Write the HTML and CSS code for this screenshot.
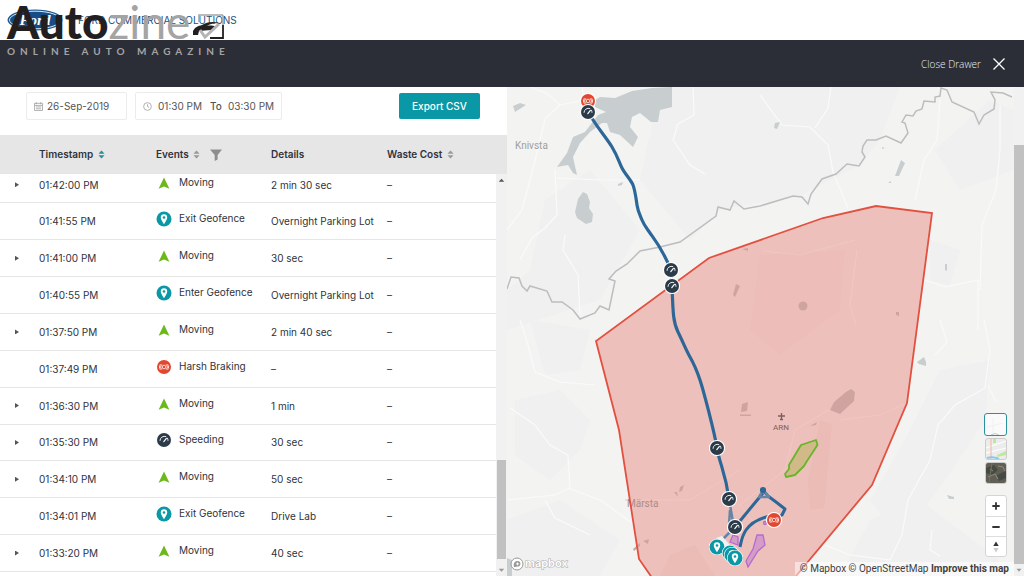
FILE: index.html
```html
<!DOCTYPE html>
<html lang="en">
<head>
<meta charset="utf-8">
<title>Ford Commercial Solutions</title>
<link rel="stylesheet" href="styles.css">
</head>
<body>
<svg class="sprite" aria-hidden="true">
  <symbol id="moving" viewBox="0 0 16 16"><path d="M8 2.6 13.4 13.8 8 11.6 2.6 13.8Z" fill="#6cb91a"/></symbol>
  <symbol id="pin" viewBox="0 0 16 16"><circle cx="8" cy="8" r="7.5" fill="#0b98a6"/><path d="M8 3.2a3.2 3.2 0 0 0-3.2 3.2C4.800 8.600 8 13 8 13s3.200-4.400 3.200-6.600A3.200 3.200 0 0 0 8 3.200Z" fill="#fff"/><circle cx="8" cy="6.500" r="1.300" fill="#0b98a6"/></symbol>
  <symbol id="brake" viewBox="0 0 16 16"><circle cx="8" cy="8" r="7" fill="#e2472f"/><g fill="none" stroke="#fff" stroke-width=".8"><circle cx="8" cy="8" r="1.800"/><path d="M5.800 5.400a3.600 3.600 0 0 0 0 5.200M10.200 5.400a3.600 3.600 0 0 1 0 5.200M4.400 5.200a4.600 4.600 0 0 0 0 5.600M11.600 5.200a4.600 4.600 0 0 1 0 5.600"/></g></symbol>
  <symbol id="speed" viewBox="0 0 16 16"><circle cx="8" cy="8" r="7" fill="#2c3b49"/><g fill="none" stroke="#fff" stroke-linecap="round"><path d="M4 8.400A4.200 4.200 0 0 1 9.800 4.500M11.500 6.200a4.200 4.200 0 0 1 .5 2.200" stroke-width=".9"/><path d="M7.800 9.600 10.400 6.400" stroke-width="1.200"/></g></symbol>
  <symbol id="sort" viewBox="0 0 8 10"><path class="sort-up" d="M4 .5 7.500 4.200H.5Z"/><path class="sort-down" d="M4 9.500.5 5.800h7Z"/></symbol>
</svg>

<div class="app">
  <header class="brand">
    <svg class="ford" viewBox="0 0 56 22" role="img" aria-label="Ford">
      <ellipse cx="28" cy="11" rx="27.500" ry="10.500" fill="#1c5a92"/>
      <ellipse cx="28" cy="11" rx="25.500" ry="8.800" fill="#164d86" stroke="#dbe6f0" stroke-width="1"/>
      <text x="28" y="16" class="ford-script">Ford</text>
    </svg>
    <span class="brand-name">FORD COMMERCIAL SOLUTIONS</span>
    <div class="mark">
      <div class="mark-title"><span class="mark-bold">Auto</span><span class="mark-light">zine</span>
        <svg class="mark-car" viewBox="0 0 34 30" aria-hidden="true">
          <path d="M7 11V4h24" fill="none" stroke="#a4a4a4" stroke-width="1.500"/>
          <path d="M31 4v10" fill="none" stroke="#a4a4a4" stroke-width="1.500"/>
          <path d="M31 14v13H18" fill="none" stroke="#231f20" stroke-width="1.800"/>
          <path d="M1 20c2-4 5-5 9-6 5-3 10-4 18-2-6 0-10 1-14 3 4-1 9 0 11 1l-6 3-12 1-1 4-5 0Z" fill="#231f20"/>
          <path d="m8 19 5 7 14-13" fill="none" stroke="#b4b4b4" stroke-width="3"/>
        </svg>
      </div>
      <div class="mark-sub">ONLINE AUTO MAGAZINE</div>
    </div>
  </header>

  <div class="drawer-bar">
    <button class="close" type="button">Close Drawer
      <svg viewBox="0 0 12 12" aria-hidden="true"><path d="M.5.5l11 11M11.500.5l-11 11" stroke="#fff" stroke-width="1.300"/></svg>
    </button>
  </div>

  <main class="content">
    <section class="events">
      <form class="toolbar">
        <label class="field date-field">
          <svg viewBox="0 0 10 10" aria-label="Date"><path d="M.5 1.500h9v8h-9zM.5 3.800h9M2.500 0v2.500M7.500 0v2.500M2 5.500h6M2 7.500h6" fill="none" stroke="#a9a9a9"/></svg>
          <input type="text" value="26-Sep-2019">
        </label>
        <div class="field time-field">
          <svg viewBox="0 0 10 10" aria-hidden="true"><circle cx="5" cy="5" r="4.300" fill="none" stroke="#a9a9a9"/><path d="M5 2.500V5l1.800 1" fill="none" stroke="#a9a9a9"/></svg>
          <input type="text" value="01:30 PM" aria-label="Start time">
          <span>To</span>
          <input type="text" value="03:30 PM" aria-label="End time">
        </div>
        <button class="export" type="button">Export CSV</button>
      </form>

      <table class="grid grid-head">
        <colgroup><col class="c-toggle"><col class="c-time"><col class="c-event"><col class="c-detail"><col></colgroup>
        <thead><tr>
          <th></th>
          <th>Timestamp <svg class="sort asc"><use href="#sort"/></svg></th>
          <th>Events <svg class="sort"><use href="#sort"/></svg> <svg class="filter" viewBox="0 0 12 12"><path d="M0 .5h12L7.600 6v4.500L4.700 12V6Z" fill="#8d8d8d"/></svg></th>
          <th>Details</th>
          <th>Waste Cost <svg class="sort"><use href="#sort"/></svg></th>
        </tr></thead>
      </table>

      <div class="scroll-area">
        <div class="viewport">
          <table class="grid grid-body">
            <colgroup><col class="c-toggle"><col class="c-time"><col class="c-event"><col class="c-detail"><col></colgroup>
            <tbody>
              <tr><td><button class="expand" type="button" aria-label="Expand"></button></td><td>01:42:00 PM</td><td class="event"><svg><use href="#moving"/></svg>Moving</td><td>2 min 30 sec</td><td>–</td></tr>
              <tr><td></td><td>01:41:55 PM</td><td class="event"><svg><use href="#pin"/></svg>Exit Geofence</td><td>Overnight Parking Lot</td><td>–</td></tr>
              <tr><td><button class="expand" type="button" aria-label="Expand"></button></td><td>01:41:00 PM</td><td class="event"><svg><use href="#moving"/></svg>Moving</td><td>30 sec</td><td>–</td></tr>
              <tr><td></td><td>01:40:55 PM</td><td class="event"><svg><use href="#pin"/></svg>Enter Geofence</td><td>Overnight Parking Lot</td><td>–</td></tr>
              <tr><td><button class="expand" type="button" aria-label="Expand"></button></td><td>01:37:50 PM</td><td class="event"><svg><use href="#moving"/></svg>Moving</td><td>2 min 40 sec</td><td>–</td></tr>
              <tr><td></td><td>01:37:49 PM</td><td class="event"><svg><use href="#brake"/></svg>Harsh Braking</td><td>–</td><td>–</td></tr>
              <tr><td><button class="expand" type="button" aria-label="Expand"></button></td><td>01:36:30 PM</td><td class="event"><svg><use href="#moving"/></svg>Moving</td><td>1 min</td><td>–</td></tr>
              <tr><td><button class="expand" type="button" aria-label="Expand"></button></td><td>01:35:30 PM</td><td class="event"><svg><use href="#speed"/></svg>Speeding</td><td>30 sec</td><td>–</td></tr>
              <tr><td><button class="expand" type="button" aria-label="Expand"></button></td><td>01:34:10 PM</td><td class="event"><svg><use href="#moving"/></svg>Moving</td><td>50 sec</td><td>–</td></tr>
              <tr><td></td><td>01:34:01 PM</td><td class="event"><svg><use href="#pin"/></svg>Exit Geofence</td><td>Drive Lab</td><td>–</td></tr>
              <tr><td><button class="expand" type="button" aria-label="Expand"></button></td><td>01:33:20 PM</td><td class="event"><svg><use href="#moving"/></svg>Moving</td><td>40 sec</td><td>–</td></tr>
            </tbody>
          </table>
        </div>
        <div class="bar bar-list" aria-hidden="true"><i class="arrow up"></i><i class="space"></i><i class="thumb"></i><i class="arrow down"></i></div>
      </div>
    </section>

    <section class="map" aria-label="Map">
      <div class="map-view">
        <svg class="map-canvas" viewBox="507 87 507 489" preserveAspectRatio="xMinYMin slice">
          <rect x="507" y="87" width="900" height="900" fill="#f3f3f2"/>
          <g fill="#f0f0f0">
            <path d="M660 87H900L880 140 860 165 800 196 720 210 690 240 640 180Z"/>
            <path d="M507 290 530 270 545 200 590 170 640 230 600 300 507 330Z"/>
            <path d="M530 320 590 330 580 370 545 375ZM515 400 560 390 590 420 580 450 550 480 515 455Z"/>
            <path d="M935 150 990 100 1014 110V170L960 190ZM930 240 960 250 950 285 930 280ZM940 370 990 360 985 420 945 480 900 540 870 500 905 440Z"/>
            <path d="M870 520 920 500 1000 560 980 576H840ZM507 520 560 500 620 540 600 576H507Z"/>
          </g>
          <g fill="none" stroke="#fafafa" stroke-width="1.200">
            <path d="M530 87 548 94 560 105 545 119 534 165 522 210 507 230M560 105 584 100 582 87M555 170 557 215 545 228 532 238 520 260M565 235 563 250 578 275 580 315M640 180 600 180 557 178"/>
            <path d="M520 320 528 345 535 372 560 382 595 385M510 408 535 425 550 445 568 455 570 488 555 495 507 500M568 488 600 500 635 525M545 500 555 518 590 535"/>
            <path d="M693 87 694 115 678 124 673 140 690 165 705 174M760 95 782 125 810 127 828 145 833 172 848 208M831 87 828 108 815 128"/>
            <path d="M940 100 937 140 924 160 915 200M1000 105 1000 150 996 190 982 225 980 290M925 280 945 287 978 280 978 330M984 320 990 350 985 388 955 405 938 425 930 460 908 500 902 535 890 560M988 385 996 402M940 320 947 342 935 355"/>
            <path d="M825 545 850 555 890 560M932 530 930 550 940 556"/>
          </g>
          <g fill="#c8cecf">
            <path d="M595 100 600 97 615 98 632 91 652 88 672 87V107L660 110 658 122 651 122 640 113 632 117 630 127 638 137 633 147 620 135 610 132 607 123 602 123 590 132 580 143 573 157 577 175 573 173 568 165 557 167 567 153 573 137 585 132 598 115 606 112 595 107Z"/>
            <path d="M583 192 587 194 590 202 589 208 593 214 592 222 586 224 577 218 575 212 578 199ZM513 106 520 103 526 105 515 112ZM618 184 623 182 622 185 618 186Z"/>
            <path d="M775 123 780 122 777 129 774 128ZM901 160 905 163 899 176 895 176ZM888 183 891 181 891 183ZM882 147 885 148 882 149ZM945 264 947 264 947 271 945 270ZM917 362 924 357 926 362 926 366 919 364ZM947 495 954 497 954 499 949 499ZM507 558 512 560V576H507Z"/>
          </g>
          <path class="border-line" d="M507 289 511 277 519 278 522 286 527 291 530 286 547 291 552 302 562 302 573 310 580 319 595 313 600 306 609 310 615 281 609 279 616 271 627 264 640 251 660 247 680 242 716 216 718 207 730 210 734 201 744 209 760 206 793 196 802 197 808 204 811 194 822 179 836 174 847 164 859 166 865 157 862 152 863 146 867 140 876 140 886 136 901 143 908 133 905 123 902 122 906 115 913 116 916 111 922 109 924 101 935 102 935 97 940 96 941 88 947 90 952 102 974 112 979 124 984 115 994 109 995 100 991 92 1003 93 1012 97"/>
          <text x="515" y="149" class="place">Knivsta</text>
          <path d="M596 341 709 258 823 218 876 206 932 213 907 403 872 485 796 576 780 595H664L639 559 619 430Z" fill="#eba49c" fill-opacity=".65"/>
          <g fill="none" stroke="#f1c8c2" stroke-width="1">
            <path d="M763 251 800 255 855 240M857 250 850 305 856 325M760 530 740 505 785 470 795 430 832 408M625 500 690 500 740 470M840 420 880 415 907 403"/>
          </g>
          <g fill="#e4b2ac">
            <path d="M760 255 845 250 840 310 780 355 750 330Z" opacity=".12"/>
            <path d="M820 420 832 424 824 508 810 510 808 480ZM670 555 695 545 715 576H660Z" opacity=".3"/>
          </g>
          <g fill="#cfa4a0">
            <circle cx="803" cy="306" r="4.500"/><path d="M736 284 740 286 735 297 733 295ZM896 312 899 312 899 316 896 315ZM742 249 748 248 748 251ZM742 404 748 402 747 411 741 412ZM740 414.500H751V416H740ZM830 410 834 402 846 392 851 389 855 392 854 401 840 414ZM810 426 817 422 816 425ZM680 487 684 485 682 491 679 492ZM674 492 677 492 678 497ZM633 549 640 543 640 546 634 551ZM643 541 649 539 648 544Z"/>
          </g>
          <text x="627" y="507" class="place inside">Märsta</text>
          <text x="773" y="430" class="place airport">ARN</text>
          <path d="M781.500 413v6.500M778 416h7M780 419.500h3" stroke="#7c5f5d" stroke-width="1.300"/>
          <path class="zone" d="M664 595 639 559 619 430 596 341 709 258 823 218 876 206 932 213 907 403 872 485 796 576 780 595"/>
          <path d="M801 445 816 440 817.500 445 807 461 804 466 795 475 786 477 785 474 789 469 789 465Z" fill="#cdb983" fill-opacity=".9" stroke="#69b52b" stroke-width="1.800" stroke-linejoin="round"/>
          <g fill="#d59cc8" stroke="#b36bd0" stroke-width="1.300"><path d="M757 535 763 535 765 545 758 551 748 567 746 561 753 549ZM733 535 738 537 738 545 730 542Z"/><circle cx="765" cy="523" r="1.500"/></g>
          <g class="route">
            <path d="M588 111C592 121 606 137 612 147S619 162 622 168 631 180 633 185 636 198 637 205 640 215 642 220 645 226 650 233 662 248 671 270L672 286C673 312 673 322 678 332S686 350 690 357 697 371 700 380 714 430 717 448 725 470 729 499"/>
            <path d="M735 527 763 493M762 489 768 496 776 502 785 509 782 515 774 519M774 515C758 518 750 524 746 530S742 538 740 547" stroke-width="3"/>
            <path d="M729 499 734 528 721 541M730 510 729 525M759 497H769L763 490Z" class="route-soft"/>
            <circle cx="763" cy="490" r="1.500"/>
          </g>
          <g id="markers">
            <g class="halo"><circle cx="588" cy="101" r="7.500"/></g><use href="#brake" x="580" y="93" width="16" height="16"/>
            <g class="halo"><circle cx="588" cy="112" r="7.500"/></g><use href="#speed" x="580" y="104" width="16" height="16"/>
            <g class="halo"><circle cx="671" cy="270" r="7.500"/></g><use href="#speed" x="663" y="262" width="16" height="16"/>
            <g class="halo"><circle cx="672" cy="286" r="7.500"/></g><use href="#speed" x="664" y="278" width="16" height="16"/>
            <g class="halo"><circle cx="717" cy="448" r="7.500"/></g><use href="#speed" x="709" y="440" width="16" height="16"/>
            <g class="halo"><circle cx="729" cy="499" r="7.500"/></g><use href="#speed" x="721" y="491" width="16" height="16"/>
            <g class="halo"><circle cx="735" cy="527" r="7.500"/></g><use href="#speed" x="727" y="519" width="16" height="16"/>
            <g class="halo"><circle cx="774" cy="520" r="7.500"/></g><use href="#brake" x="766" y="512" width="16" height="16"/>
            <path d="M716 538 722 536 730 545 722 549Z" fill="#eef0f1"/>
            <g class="halo"><circle cx="717" cy="547" r="7.500"/></g><use href="#pin" x="709" y="539" width="16" height="16"/>
            <g class="halo"><circle cx="730" cy="553" r="7.500"/></g><use href="#pin" x="722" y="545" width="16" height="16"/>
            <g class="halo"><circle cx="732" cy="555" r="7.500"/></g><use href="#pin" x="724" y="547" width="16" height="16"/>
            <g class="halo"><circle cx="735" cy="558" r="7.500"/></g><use href="#pin" x="727" y="550" width="16" height="16"/>
          </g>
        </svg>

        <div class="controls">
          <button class="style-btn light active" type="button" aria-label="Light map"><svg viewBox="0 0 20 20"><path d="M8 3v16M2 12 18 8" stroke="#f1f1f1"/><path d="M6 20q4-3 8 0" stroke="#b9cfd3" fill="none"/></svg></button>
          <button class="style-btn" type="button" aria-label="Street map"><svg viewBox="0 0 20 20"><path d="M0 9 20 2M0 14 20 9" stroke="#fff"/><path d="M5 0v20" stroke="#efb6a0"/><path d="M7 0h3v4H7ZM11 16l9-4v4l-9 2Z" fill="#bdea98"/><path d="M1 19q6-2 12 1" stroke="#8cc9e8" stroke-width="2" fill="none"/></svg></button>
          <button class="style-btn" type="button" aria-label="Satellite map"><svg viewBox="0 0 20 20"><rect width="20" height="20" fill="#615f55"/><path d="M0 5 8 2l4 5-6 5-6-2ZM11 12l9-4v7l-7 3Z" fill="#454b42"/><path d="M2 14 9 11l3 5M12 3l5 1 2 4M4 6l3 2" stroke="#918a7c" fill="none"/><path d="M3 20 6 0" stroke="#74716a"/></svg></button>
          <div class="nav">
            <button type="button" aria-label="Zoom in"><svg viewBox="0 0 20 20"><path d="M10 7v6M7 10h6" stroke="#333" stroke-width="1.800" stroke-linecap="round"/></svg></button>
            <button type="button" aria-label="Zoom out"><svg viewBox="0 0 20 20"><path d="M7 10h6" stroke="#333" stroke-width="1.800" stroke-linecap="round"/></svg></button>
            <button type="button" aria-label="Reset north"><svg viewBox="0 0 20 20"><path d="M10 4.500 12.700 9H7.300Z" fill="#333"/><path d="M10 15.500 7.300 11h5.400Z" fill="#ccc"/></svg></button>
          </div>
        </div>

        <a class="mapbox" href="#" aria-label="mapbox"><svg viewBox="0 0 14 14"><circle cx="7" cy="7" r="6" fill="#fff" stroke="#999"/><path d="M4 10c-.8-3 .2-6 3.600-6a2.800 2.800 0 0 1 0 5.600C6.500 9.900 5 10.200 4 10Z" fill="#999"/><path d="m7.500 5 .6 1.300 1.400.6-1.400.6-.6 1.300-.6-1.300L5.500 6.900l1.400-.6Z" fill="#fff"/></svg><span>mapbox</span></a>
        <div class="credits"><a href="#">© Mapbox</a> <a href="#">© OpenStreetMap</a> <a class="improve" href="#">Improve this map</a></div>
      </div>
      <div class="bar bar-page" aria-hidden="true"><i class="space"></i><i class="thumb"></i><i class="arrow down"></i></div>
    </section>
  </main>
</div>
</body>
</html>
```
FILE: styles.css
```css
* { box-sizing: border-box; }
body {
  margin: 0;
  font-family: Inter, "Open Sans", sans-serif;
  font-size: 10px;
  color: #2f333b;
  background: #fff;
}
button, input { font: inherit; color: inherit; }
button { padding: 0; border: 0; background: none; }
.sprite { display: none; }
.app { display: flex; flex-direction: column; height: 100vh; overflow: hidden; }

/* Brand strip */
.brand {
  position: relative;
  flex: none;
  display: flex;
  align-items: center;
  gap: 15px;
  height: 40px;
  padding-left: 7px;
}
.ford { width: 56px; height: 22px; }
.ford-script { font: italic 700 15px "Liberation Serif", serif; fill: #fff; text-anchor: middle; }
.brand-name { font-size: 10px; color: #23527f; }
.mark { position: absolute; left: 7px; top: 0; z-index: 1; }
.mark-title { display: flex; align-items: flex-end; height: 41px; font-family: Lato, sans-serif; font-size: 46px; line-height: 38px; }
.mark-bold { font-weight: 900; color: #231f20; }
.mark-light { font-weight: 400; color: #a4a4a4; }
.mark-car { width: 34px; height: 30px; margin-left: 2px; }
.mark-sub { padding-top: 2px; font-family: Lato, sans-serif; font-size: 10px; font-weight: 700; line-height: 16px; letter-spacing: 5px; color: #a3a3a5; white-space: nowrap; }

/* Drawer bar */
.drawer-bar { flex: none; display: flex; align-items: center; justify-content: flex-end; height: 47px; padding-right: 19px; background: #2b2e36; }
.close { display: flex; align-items: center; gap: 12px; font-family: "Open Sans", sans-serif; font-size: 10px; font-weight: 300; color: #f0f0f2; }
.close svg { width: 12px; height: 12px; }

.content { flex: 1; min-height: 0; display: grid; grid-template-columns: 507fr 517fr; }

/* Events panel */
.events { display: flex; flex-direction: column; min-width: 0; min-height: 0; background: #fff; }
.toolbar { flex: none; display: flex; align-items: center; gap: 8px; height: 48px; margin: 0; padding: 0 27px 10px 26px; }
.field { display: flex; align-items: center; height: 28px; border: 1px solid #ececec; border-radius: 2px; color: #555; }
.field svg { flex: none; width: 9px; height: 9px; }
.field input { min-width: 0; padding: 0; border: 0; outline: 0; background: none; }
.date-field { width: 101px; padding-left: 7px; gap: 4px; }
.date-field input { width: 70px; }
.time-field { width: 147px; padding-left: 7px; gap: 6px; }
.time-field input { width: 46px; }
.time-field span { width: 12px; font-weight: 500; }
.export { width: 81px; height: 26px; margin-left: auto; border-radius: 2px; background: #0b98a6; color: #fff; font-weight: 500; }

.grid { width: 100%; table-layout: fixed; border-collapse: collapse; }
.grid th, .grid td { padding: 0; text-align: left; white-space: nowrap; }
.c-toggle { width: 39px; }
.c-time { width: 117px; }
.c-event { width: 115px; }
.c-detail { width: 116px; }
.grid-head { flex: none; height: 39px; background: #e6e6e6; }
.grid-head th { height: 39px; padding-bottom: 2px; font-weight: 600; line-height: 14px; }
.sort { width: 7px; height: 9px; margin-left: 2px; vertical-align: -1px; fill: #999; }
.sort.asc .sort-up, .sort.asc { fill: #2c8d96; }
.filter { width: 12px; height: 12px; margin-left: 7px; vertical-align: -3px; }

.scroll-area { flex: 1; min-height: 0; display: flex; }
.viewport { flex: 1; min-width: 0; overflow: hidden; }
.grid-body { height: calc(100% + 3px); margin-top: -7px; }
.grid-body tr { border-bottom: 1px solid #e6e6e6; }
.grid-body .event { padding-bottom: 4px; }
.event svg { width: 16px; height: 16px; margin-right: 7px; vertical-align: middle; }
.expand { display: block; width: 4px; height: 5px; margin-left: 15px; background: #555; clip-path: polygon(0 0, 100% 50%, 0 100%); }

/* Scroll bars */
.bar { flex: none; display: flex; flex-direction: column; background: #f1f1f1; }
.bar-list { width: 11px; }
.bar-page { width: 10px; }
.arrow { flex: none; height: 12px; background: #555; clip-path: polygon(50% 40%, 75% 65%, 25% 65%); }
.arrow.down { background: #999; clip-path: polygon(25% 40%, 75% 40%, 50% 65%); }
.thumb { background: #c1c1c1; }
.bar-list .space { flex: 274; }
.bar-list .thumb { flex: 99; margin: 0 1px 5px; }
.bar-page .space { flex: 58; }
.bar-page .thumb { flex: 419; }

/* Map */
.map { display: flex; min-width: 0; min-height: 0; }
.map-view { position: relative; flex: 1; min-width: 0; overflow: hidden; background: #f2f3f2; }
.map-canvas { display: block; width: 100%; height: 100%; }
.border-line { fill: none; stroke: #bcbdbd; stroke-width: 1.5; }
.zone { fill: none; stroke: #e2503f; stroke-width: 1.8; }
.route { fill: none; stroke: #2d6797; stroke-width: 3.2; stroke-linejoin: round; }
.route-soft { stroke: #6685a6; stroke-width: 2.5; }
.halo { fill: #fff; stroke: #fff; stroke-width: 1.2; }
.place { font: 10px Roboto, sans-serif; fill: #a0a0a0; }
.inside { fill: #ab8d8a; }
.airport { font-size: 8px; fill: #7c5f5d; }

.controls { position: absolute; right: 7px; bottom: 19px; display: flex; flex-direction: column; align-items: center; gap: 2px; }
.style-btn { width: 22px; height: 22px; overflow: hidden; border: 1px solid #ccc; border-radius: 3px; background: #ececec; }
.style-btn svg { display: block; width: 20px; height: 20px; }
.style-btn.active { width: 23px; height: 23px; border: 1px solid #2a929c; background: #fafafa; }
.nav { width: 22px; margin-top: 9px; border: 1px solid #d5d5d5; border-radius: 3px; background: #fff; }
.nav button { display: block; width: 20px; height: 20px; }
.nav button + button { border-top: 1px solid #ddd; }
.nav svg { display: block; width: 20px; height: 20px; }

.mapbox { position: absolute; left: 3px; bottom: 5px; display: flex; align-items: center; gap: 1px; text-decoration: none; }
.mapbox svg { width: 14px; height: 14px; }
.mapbox span { font: 600 11px/15px Inter, sans-serif; color: #fff; -webkit-text-stroke: 1px #a8a8a8; paint-order: stroke fill; }
.credits { position: absolute; right: 0; bottom: 0; padding: 0 5px; font: 10px/14px Roboto, sans-serif; color: #404040; background: rgba(255, 255, 255, .5); white-space: nowrap; }
.credits a { color: inherit; text-decoration: none; }
.credits .improve { font-weight: 700; }
```
